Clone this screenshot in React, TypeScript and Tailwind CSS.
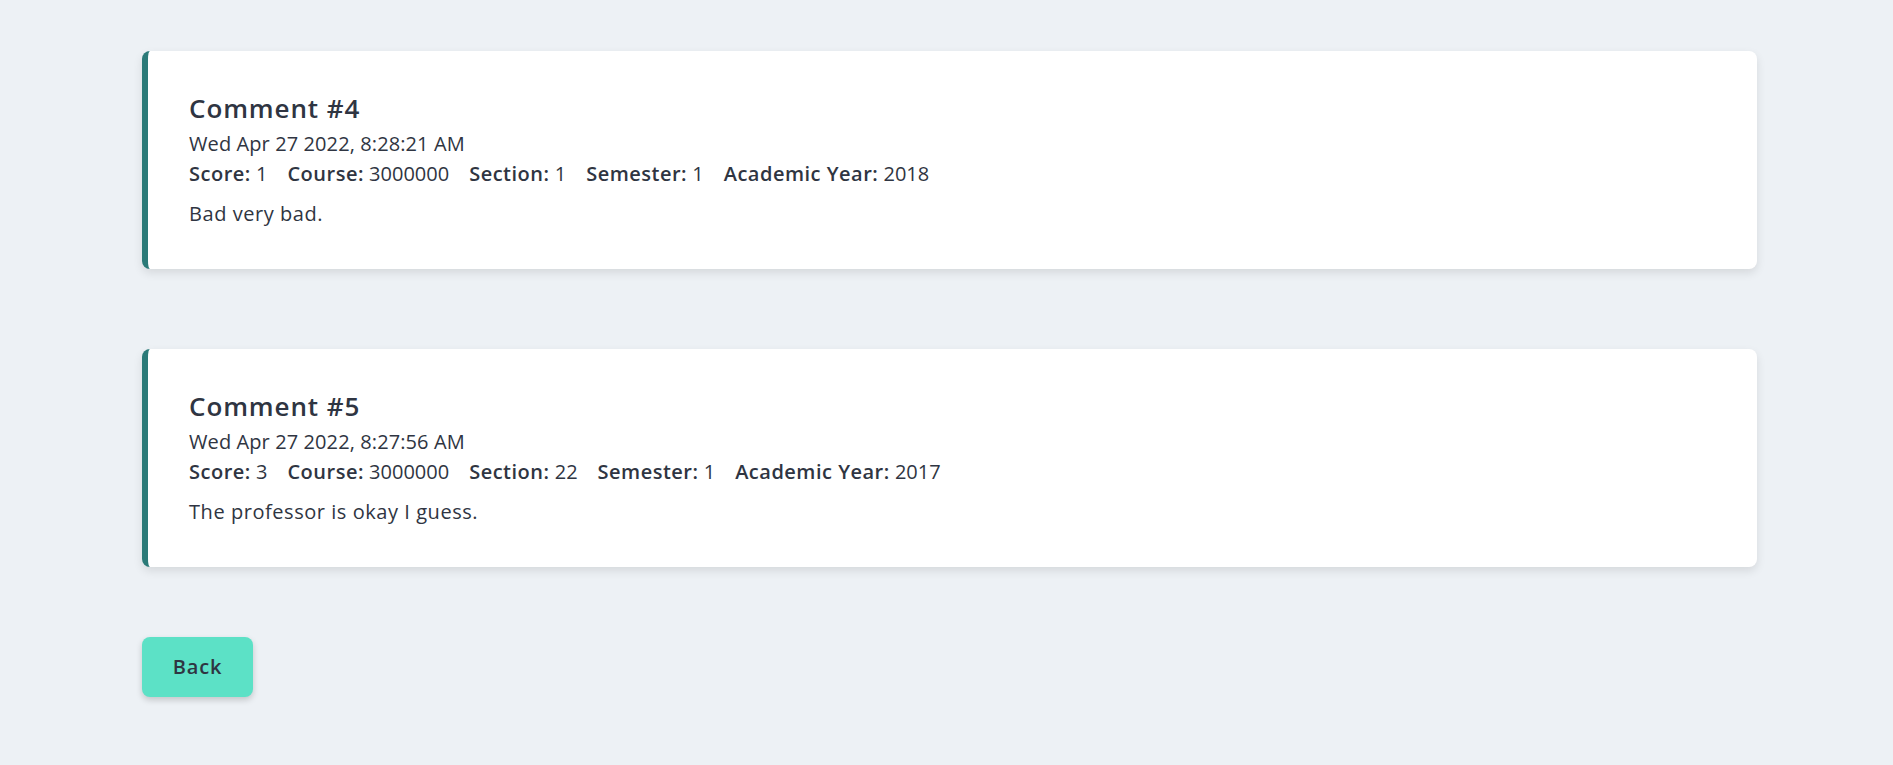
import React from "react";

type C = { n: number; date: string; score: number; course: string; section: number; semester: number; year: number; text: string };

const comments: C[] = [
  { n: 4, date: "Wed Apr 27 2022, 8:28:21 AM", score: 1, course: "3000000", section: 1, semester: 1, year: 2018, text: "Bad very bad." },
  { n: 5, date: "Wed Apr 27 2022, 8:27:56 AM", score: 3, course: "3000000", section: 22, semester: 1, year: 2017, text: "The professor is okay I guess." },
];

function Item({ label, value }: { label: string; value: string | number }) {
  return (
    <span>
      <span className="font-semibold tracking-[0.5px]">{label}:</span> {value}
    </span>
  );
}

export default function App() {
  return (
    <div
      className="min-h-[765px] bg-[#edf1f5] pl-[142px] pr-[136px] pt-[51px] pb-10 text-[#2f3542]"
      style={{ fontFamily: '"Open Sans", "Noto Sans", sans-serif' }}
    >
      <div className="flex flex-col gap-[80px]">
        {comments.map((c) => (
          <div
            key={c.n}
            className="h-[218px] rounded-lg border-l-[6px] border-[#2b7a78] bg-white pl-[41px] pr-10 pt-[36px] shadow-[0_4px_10px_rgba(0,0,0,0.10)]"
          >
            <div className="text-[26px] font-semibold leading-[42px] tracking-[0.9px]">Comment #{c.n}</div>
            <div className="text-[20px] leading-[29px] tracking-[0.1px]">{c.date}</div>
            <div className="flex gap-[20px] text-[20px] leading-[31px]">
              <Item label="Score" value={c.score} />
              <Item label="Course" value={c.course} />
              <Item label="Section" value={c.section} />
              <Item label="Semester" value={c.semester} />
              <Item label="Academic Year" value={c.year} />
            </div>
            <div className="mt-[9px] text-[20px] leading-[31px] tracking-[0.55px]">{c.text}</div>
          </div>
        ))}
      </div>
      <button className="mt-[70px] h-[60px] w-[111px] rounded-lg bg-[#5ce1c6] text-[20px] font-semibold tracking-[0.8px] text-[#2f3542] shadow-[0_3px_6px_rgba(0,0,0,0.18)]">
        Back
      </button>
    </div>
  );
}
